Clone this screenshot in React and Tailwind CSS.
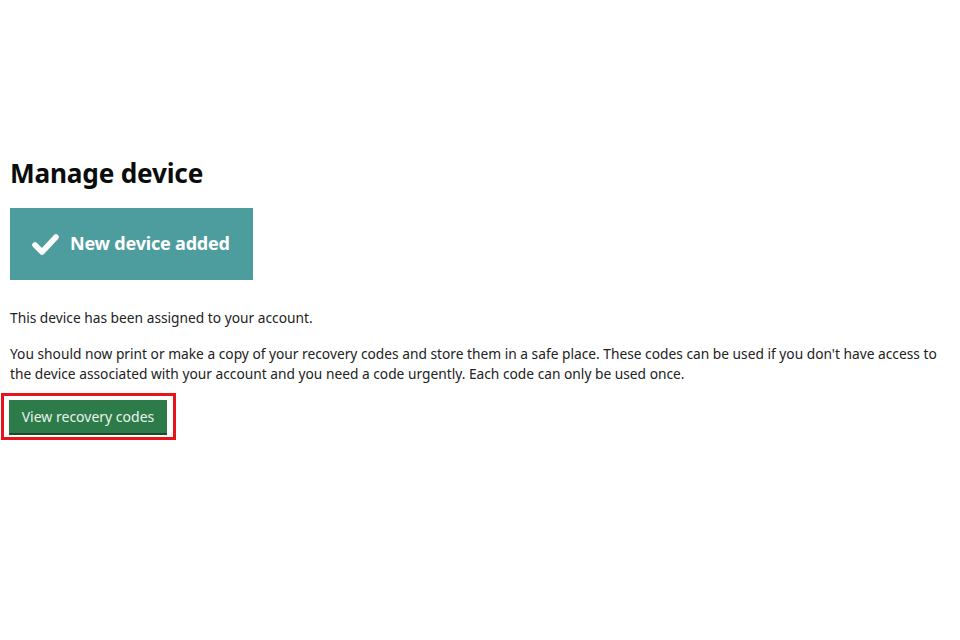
export default function App() {
  return (
    <div className="w-[960px] h-[640px] bg-white relative" style={{ fontFamily: '"Noto Sans", "Liberation Sans", sans-serif' }}>
      <div className="pt-[155px] pl-[10px]">
        <h1 className="text-[26.2px] leading-[36px] font-bold text-[#0b0c0c] tracking-[-0.2px]">Manage device</h1>
        <div className="mt-[17px] w-[243px] h-[72px] bg-[#4e9d9e] flex items-center pl-[22px]">
          <svg width="27" height="22" viewBox="0 0 27 22" className="mr-[11px]">
            <path d="M3 12 L10 19 L24 4" stroke="white" strokeWidth="5.5" fill="none" strokeLinecap="round" strokeLinejoin="round" />
          </svg>
          <span className="text-white font-bold text-[18px] tracking-[-0.2px] -mt-[2px]">New device added</span>
        </div>
        <p className="mt-[28px] text-[13.75px] leading-[20px] text-[#222]">This device has been assigned to your account.</p>
        <p className="mt-[16px] text-[13.75px] leading-[20px] text-[#222] whitespace-nowrap">
          You should now print or make a copy of your recovery codes and store them in a safe place. These codes can be used if you don't have access to<br />
          the device associated with your account and you need a code urgently. Each code can only be used once.
        </p>
      </div>
      <div className="ml-[1px] mt-[9px] w-[175px] h-[47px] border-[3px] border-[#e8141c] flex items-start pl-[5px] pt-[4px]">
        <div className="w-[158px] h-[33px] bg-[#2e7b4a] shadow-[0_2px_0_#1a4a2b] flex items-center justify-center text-[14px] text-[#e8f3ea]">
          View recovery codes
        </div>
      </div>
    </div>
  );
}
